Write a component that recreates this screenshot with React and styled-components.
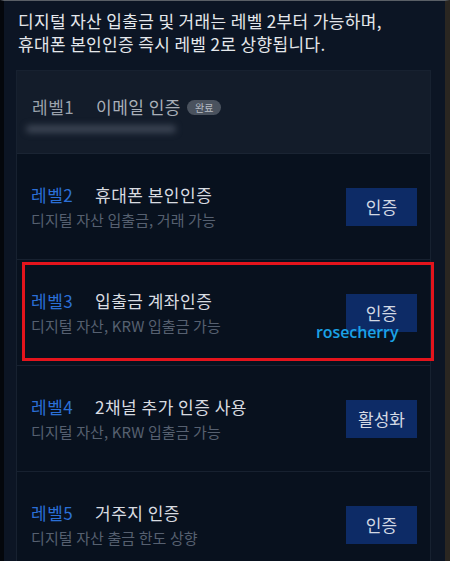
import React from 'react';
import styled, { createGlobalStyle } from 'styled-components';

const GlobalStyle = createGlobalStyle`
  html, body {
    margin: 0;
    padding: 0;
    background: #0c1524;
    overflow: hidden;
  }
  body {
    font-family: "Noto Sans CJK KR", "Noto Sans", sans-serif;
  }
`;

// page frame with the dark screen edges
const Frame = styled.div`
  position: relative;
  height: 561px;
  box-sizing: border-box;
  border-top: 1px solid #5a5f66;
  border-left: 4px solid #04070c;
  border-right: 5px solid #2a2621;
  background: #0c1524;
  padding: 0 14px 0 12px;
  overflow: hidden;
`;

const Notice = styled.p`
  margin: 0;
  padding: 8px 0 0 2px;
  color: #e4e7eb;
  font-size: 17px;
  line-height: 23px;
  letter-spacing: 0.35px;
`;

const Card = styled.div`
  margin-top: 15px;
  border: 1px solid #172130;
  background: #08111e;
`;

const DoneSection = styled.div`
  background: #131c2a;
  padding: 24px 15px 20px;
  border-bottom: 1px solid #1a2433;
`;

const Row = styled.div`
  display: flex;
  align-items: center;
  justify-content: space-between;
  height: 106px;
  box-sizing: border-box;
  padding: 0 13px 0 14px;
  border-bottom: 1px solid #172130;
`;

const TitleLine = styled.div`
  display: flex;
  align-items: center;
  font-size: 17px;
  line-height: 24px;
  letter-spacing: 0.5px;
`;

const Level = styled.span`
  width: 64px;
  flex: none;
  color: ${(p) => (p.$done ? '#9aa1ab' : '#2b6fd6')};
`;

const Title = styled.span`
  color: ${(p) => (p.$done ? '#a9afb8' : '#d9dce1')};
`;

const Badge = styled.span`
  margin-left: 6px;
  padding: 0 8px;
  border-radius: 8px;
  background: #4a525e;
  color: #b7bcc4;
  font-size: 10px;
  line-height: 15px;
  letter-spacing: 0;
`;

const BlurredEmail = styled.div`
  margin-top: 6px;
  margin-left: -6px;
  width: 150px;
  height: 8px;
  background: #3b4453;
  filter: blur(3px);
  border-radius: 4px;
`;

const Sub = styled.div`
  margin-top: 2px;
  color: #566070;
  font-size: 15px;
  line-height: 21px;
  letter-spacing: 0.1px;
`;

const Button = styled.button`
  width: 71px;
  height: 38px;
  border: none;
  background: #0d2b66;
  color: #d3d9e4;
  font-family: inherit;
  font-size: 17px;
  padding: 0;
`;

const Highlight = styled.div`
  position: absolute;
  left: 18px;
  top: 261px;
  width: 412px;
  height: 99px;
  box-sizing: border-box;
  border: 3px solid #e3141c;
  pointer-events: none;
`;

const Watermark = styled.span`
  position: absolute;
  left: 312px;
  top: 320px;
  color: #1ba2e6;
  font-family: "Open Sans", sans-serif;
  font-weight: 600;
  font-size: 16px;
  letter-spacing: -0.1px;
`;

const levels = [
  { level: '레벨2', title: '휴대폰 본인인증', sub: '디지털 자산 입출금, 거래 가능', action: '인증' },
  { level: '레벨3', title: '입출금 계좌인증', sub: '디지털 자산, KRW 입출금 가능', action: '인증' },
  { level: '레벨4', title: '2채널 추가 인증 사용', sub: '디지털 자산, KRW 입출금 가능', action: '활성화' },
  { level: '레벨5', title: '거주지 인증', sub: '디지털 자산 출금 한도 상향', action: '인증' },
];

const App = () => (
  <>
    <GlobalStyle />
    <Frame>
      <Notice>
        디지털 자산 입출금 및 거래는 레벨 2부터 가능하며,
        <br />
        휴대폰 본인인증 즉시 레벨 2로 상향됩니다.
      </Notice>
      <Card>
        <DoneSection>
          <TitleLine>
            <Level $done>레벨1</Level>
            <Title $done>이메일 인증</Title>
            <Badge>완료</Badge>
          </TitleLine>
          <BlurredEmail />
        </DoneSection>
        {levels.map((l) => (
          <Row key={l.level}>
            <div>
              <TitleLine>
                <Level>{l.level}</Level>
                <Title>{l.title}</Title>
              </TitleLine>
              <Sub>{l.sub}</Sub>
            </div>
            <Button>{l.action}</Button>
          </Row>
        ))}
      </Card>
      <Highlight />
      <Watermark>rosecherry</Watermark>
    </Frame>
  </>
);

export default App;
